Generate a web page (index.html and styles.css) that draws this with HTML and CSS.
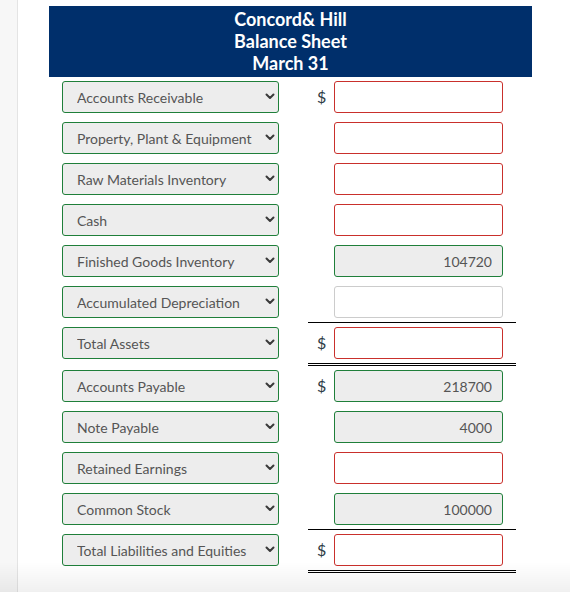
FILE: index.html
```html
<!DOCTYPE html>
<html lang="en">
<head>
<meta charset="utf-8">
<title>Balance Sheet</title>
<link rel="stylesheet" href="styles.css">
</head>
<body>
<div class="page">
  <aside class="strip"></aside>
  <main class="main">
    <div class="sheet">
      <div class="head">
        <div>Concord&amp; Hill</div>
        <div>Balance Sheet</div>
        <div>March 31</div>
      </div>

      <div class="row">
        <div class="sel"><select><option>Accounts Receivable</option></select><svg class="chev" width="10" height="7" viewBox="0 0 10 7"><path d="M1.5 1.5 L5 5 L8.5 1.5" /></svg></div>
        <div class="amt"><span class="cur">$</span><input class="box bad" type="text"></div>
      </div>
      <div class="row">
        <div class="sel"><select><option>Property, Plant &amp; Equipment</option></select><svg class="chev" width="10" height="7" viewBox="0 0 10 7"><path d="M1.5 1.5 L5 5 L8.5 1.5" /></svg></div>
        <div class="amt"><span class="cur"></span><input class="box bad" type="text"></div>
      </div>
      <div class="row">
        <div class="sel"><select><option>Raw Materials Inventory</option></select><svg class="chev" width="10" height="7" viewBox="0 0 10 7"><path d="M1.5 1.5 L5 5 L8.5 1.5" /></svg></div>
        <div class="amt"><span class="cur"></span><input class="box bad" type="text"></div>
      </div>
      <div class="row">
        <div class="sel"><select><option>Cash</option></select><svg class="chev" width="10" height="7" viewBox="0 0 10 7"><path d="M1.5 1.5 L5 5 L8.5 1.5" /></svg></div>
        <div class="amt"><span class="cur"></span><input class="box bad" type="text"></div>
      </div>
      <div class="row">
        <div class="sel"><select><option>Finished Goods Inventory</option></select><svg class="chev" width="10" height="7" viewBox="0 0 10 7"><path d="M1.5 1.5 L5 5 L8.5 1.5" /></svg></div>
        <div class="amt"><span class="cur"></span><input class="box ok" type="text" value="104720"></div>
      </div>
      <div class="row single">
        <div class="sel"><select><option>Accumulated Depreciation</option></select><svg class="chev" width="10" height="7" viewBox="0 0 10 7"><path d="M1.5 1.5 L5 5 L8.5 1.5" /></svg></div>
        <div class="amt"><span class="cur"></span><input class="box plain" type="text"></div>
      </div>
      <div class="row double">
        <div class="sel"><select><option>Total Assets</option></select><svg class="chev" width="10" height="7" viewBox="0 0 10 7"><path d="M1.5 1.5 L5 5 L8.5 1.5" /></svg></div>
        <div class="amt"><span class="cur">$</span><input class="box bad" type="text"></div>
      </div>
      <div class="row">
        <div class="sel"><select><option>Accounts Payable</option></select><svg class="chev" width="10" height="7" viewBox="0 0 10 7"><path d="M1.5 1.5 L5 5 L8.5 1.5" /></svg></div>
        <div class="amt"><span class="cur">$</span><input class="box ok" type="text" value="218700"></div>
      </div>
      <div class="row">
        <div class="sel"><select><option>Note Payable</option></select><svg class="chev" width="10" height="7" viewBox="0 0 10 7"><path d="M1.5 1.5 L5 5 L8.5 1.5" /></svg></div>
        <div class="amt"><span class="cur"></span><input class="box ok" type="text" value="4000"></div>
      </div>
      <div class="row">
        <div class="sel"><select><option>Retained Earnings</option></select><svg class="chev" width="10" height="7" viewBox="0 0 10 7"><path d="M1.5 1.5 L5 5 L8.5 1.5" /></svg></div>
        <div class="amt"><span class="cur"></span><input class="box bad" type="text"></div>
      </div>
      <div class="row single">
        <div class="sel"><select><option>Common Stock</option></select><svg class="chev" width="10" height="7" viewBox="0 0 10 7"><path d="M1.5 1.5 L5 5 L8.5 1.5" /></svg></div>
        <div class="amt"><span class="cur"></span><input class="box ok" type="text" value="100000"></div>
      </div>
      <div class="row double">
        <div class="sel"><select><option>Total Liabilities and Equities</option></select><svg class="chev" width="10" height="7" viewBox="0 0 10 7"><path d="M1.5 1.5 L5 5 L8.5 1.5" /></svg></div>
        <div class="amt"><span class="cur">$</span><input class="box bad" type="text"></div>
      </div>
    </div>
  </main>
  <div class="fade"></div>
</div>
</body>
</html>
```

FILE: styles.css
```css
* { box-sizing: border-box; }

html, body {
  margin: 0;
  padding: 0;
  background: #ffffff;
  font-family: Lato, "Liberation Sans", sans-serif;
}

.page {
  display: flex;
  min-height: 100vh;
}

.strip {
  width: 18px;
  flex: 0 0 18px;
  background: #f7f7f7;
  border-right: 1px solid #e4e4e4;
}

.main {
  padding-left: 31px;
}

.sheet {
  width: 483px;
  padding-top: 6px;
}

.head {
  background: #002f6b;
  color: #ffffff;
  text-align: center;
  font-weight: 700;
  font-size: 18px;
  line-height: 22px;
  padding: 2px 0 3px;
}

.row {
  display: flex;
  padding: 0 16px 0 13px;
}

.sel {
  position: relative;
  width: 217px;
  margin-right: 29px;
  padding-top: 4px;
}

.sel select {
  appearance: none;
  -webkit-appearance: none;
  display: block;
  width: 217px;
  height: 32px;
  margin: 0;
  border: 1px solid #1f7f3a;
  border-radius: 3px;
  background: #ededed;
  color: #555555;
  font-family: Lato, "Liberation Sans", sans-serif;
  font-size: 14px;
  padding: 0 20px 0 14px;
}

.chev {
  position: absolute;
  right: 4px;
  top: 16px;
  fill: none;
  stroke: #3a3a3a;
  stroke-width: 2;
  stroke-linecap: round;
  stroke-linejoin: round;
}

.amt {
  width: 208px;
  display: flex;
  align-items: center;
  padding: 4px 13px 4px 0;
  border-bottom: 1px solid transparent;
}

.row.single .amt {
  border-bottom: 1px solid #000000;
}

.row.double .amt {
  border-bottom: 3px double #000000;
}

.cur {
  width: 26px;
  flex: 0 0 26px;
  padding-left: 9px;
  color: #2d3b45;
  font-size: 16px;
  line-height: 20px;
}

.box {
  width: 169px;
  height: 32px;
  margin: 0;
  border: 1px solid #cccccc;
  border-radius: 3px;
  background: #ffffff;
  color: #555555;
  font-family: Lato, "Liberation Sans", sans-serif;
  font-size: 14px;
  text-align: right;
  padding: 0 10px;
  outline: none;
}

.box.bad {
  border-color: #c9302c;
}

.box.ok {
  border-color: #1f7f3a;
  background: #ededed;
}

.box.plain {
  border-color: #cccccc;
}

.fade {
  position: fixed;
  left: 0;
  right: 0;
  bottom: 0;
  height: 30px;
  background: linear-gradient(rgba(0, 0, 0, 0), rgba(0, 0, 0, 0.06));
  pointer-events: none;
}
```
